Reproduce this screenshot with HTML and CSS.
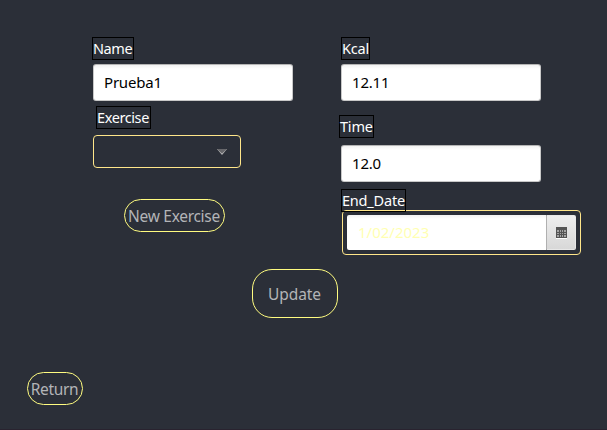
FILE: index.html
```html
<!DOCTYPE html>
<html lang="en">
<head>
<meta charset="utf-8">
<title>Edit exercise</title>
<link rel="stylesheet" href="styles.css">
</head>
<body>
<main class="window">
  <div class="form">
    <section class="column column-left">
      <div class="label label-name"><span>Name</span></div>
      <div class="field"><span>Prueba1</span></div>
      <div class="label label-exercise"><span>Exercise</span></div>
      <div class="combo">
        <svg width="12" height="8" viewBox="0 0 12 8"><path d="M1 1h10L6 7z" fill="#bbb"/><path d="M1 1h10L6 5.6z" fill="#66666a"/></svg>
      </div>
      <button class="button button-new"><span>New Exercise</span></button>
    </section>
    <section class="column column-right">
      <div class="label label-kcal"><span>Kcal</span></div>
      <div class="field"><span>12.11</span></div>
      <div class="label label-time"><span>Time</span></div>
      <div class="field"><span>12.0</span></div>
      <div class="label label-date"><span>End_Date</span></div>
      <div class="picker">
        <div class="picker-text"><span>1/02/2023</span></div>
        <div class="picker-button">
          <svg width="11" height="12" viewBox="0 0 11 12" shape-rendering="crispEdges">
            <path d="M0 11h11v1H0z" fill="#fff"/>
            <path d="M0 0h11v11H0z" fill="#555"/>
            <path d="M1 3h2v2H1zM4 3h1v2H4zM6 3h1v2H6zM8 3h2v2H8zM1 6h2v1H1zM4 6h1v1H4zM6 6h1v1H6zM8 6h2v1H8zM1 8h2v2H1zM4 8h1v2H4zM6 8h1v2H6zM8 8h2v2H8z" fill="#a5a5a5"/>
          </svg>
        </div>
      </div>
    </section>
  </div>
  <button class="button button-update"><span>Update</span></button>
  <button class="button button-return"><span>Return</span></button>
</main>
</body>
</html>
```
FILE: styles.css
```css
* { box-sizing: border-box; }

body {
  margin: 0;
  background: #2b2f38;
  font: 15px/21px "Noto Sans", "Open Sans", sans-serif;
}

.window {
  display: flex;
  flex-direction: column;
  width: 607px;
  height: 430px;
  border-bottom: 1px solid #29232f;
}

.form {
  display: grid;
  grid-template-columns: 200px 240px;
  column-gap: 48px;
  height: 255px;
  padding: 37px 0 0 93px;
}

.column {
  display: flex;
  flex-direction: column;
  align-items: flex-start;
}

.label {
  height: 23px;
  border: 1px solid #000;
  color: #fff;
  font-size: 14.5px;
  white-space: nowrap;
}

.label-name { width: 42px; margin-left: -1px; letter-spacing: -0.4px; }
.label-exercise { width: 55px; margin: 5px 0 6px 3px; letter-spacing: -0.4px; }
.label-kcal { width: 29px; letter-spacing: -0.2px; }
.label-time { width: 35px; margin: 14px 0 7px -2px; letter-spacing: -0.2px; }
.label-date { position: relative; z-index: 1; width: 65px; margin: 7px 0 -2px; letter-spacing: -0.2px; }

.field {
  width: 200px;
  height: 37px;
  padding: 7px 10px;
  border: 1px solid #c8c8c8;
  border-top-color: #b5b5b5;
  border-radius: 3px;
  background: linear-gradient(#f2f2f2, #fff 4px);
  color: #000;
  letter-spacing: -0.2px;
}

.label-name + .field,
.label-kcal + .field { margin-top: 4px; }

.combo {
  display: flex;
  align-items: center;
  justify-content: flex-end;
  width: 148px;
  height: 33px;
  padding-right: 12px;
  border: 1px solid #ffe68a;
  border-radius: 4px;
}

.button {
  display: flex;
  align-items: center;
  justify-content: center;
  flex-shrink: 0;
  padding: 0 1px 0 0;
  border: 1px solid #fffc80;
  background: transparent;
  color: #b3b4b7;
  font: 15.5px/22px "Noto Sans", "Open Sans", sans-serif;
  letter-spacing: -0.3px;
  white-space: nowrap;
}

.button-new { width: 101px; height: 33px; margin: 31px 0 0 31px; border-radius: 17px; }
.button-update { width: 86px; height: 49px; margin: 14px 0 0 252px; border-radius: 20px; letter-spacing: -0.1px; }
.button-return { width: 56px; height: 33px; margin: 54px 0 0 27px; border-radius: 17px; }

.picker {
  display: flex;
  width: 239px;
  height: 45px;
  margin-left: 1px;
  padding: 4px;
  border: 1px solid #ffe68a;
  border-radius: 4px;
}

.picker-text {
  flex: 1;
  padding: 7px 11px;
  border-radius: 2px 0 0 2px;
  background: linear-gradient(#f2f2f2, #fff 4px);
  color: #ffffb3;
}

.picker-button {
  display: flex;
  align-items: center;
  justify-content: center;
  width: 30px;
  border: 1px solid #e8e8e8;
  border-left-color: #b0b0b0;
  border-radius: 0 2px 2px 0;
  background: linear-gradient(#eee, #d8d8d8);
}
```
